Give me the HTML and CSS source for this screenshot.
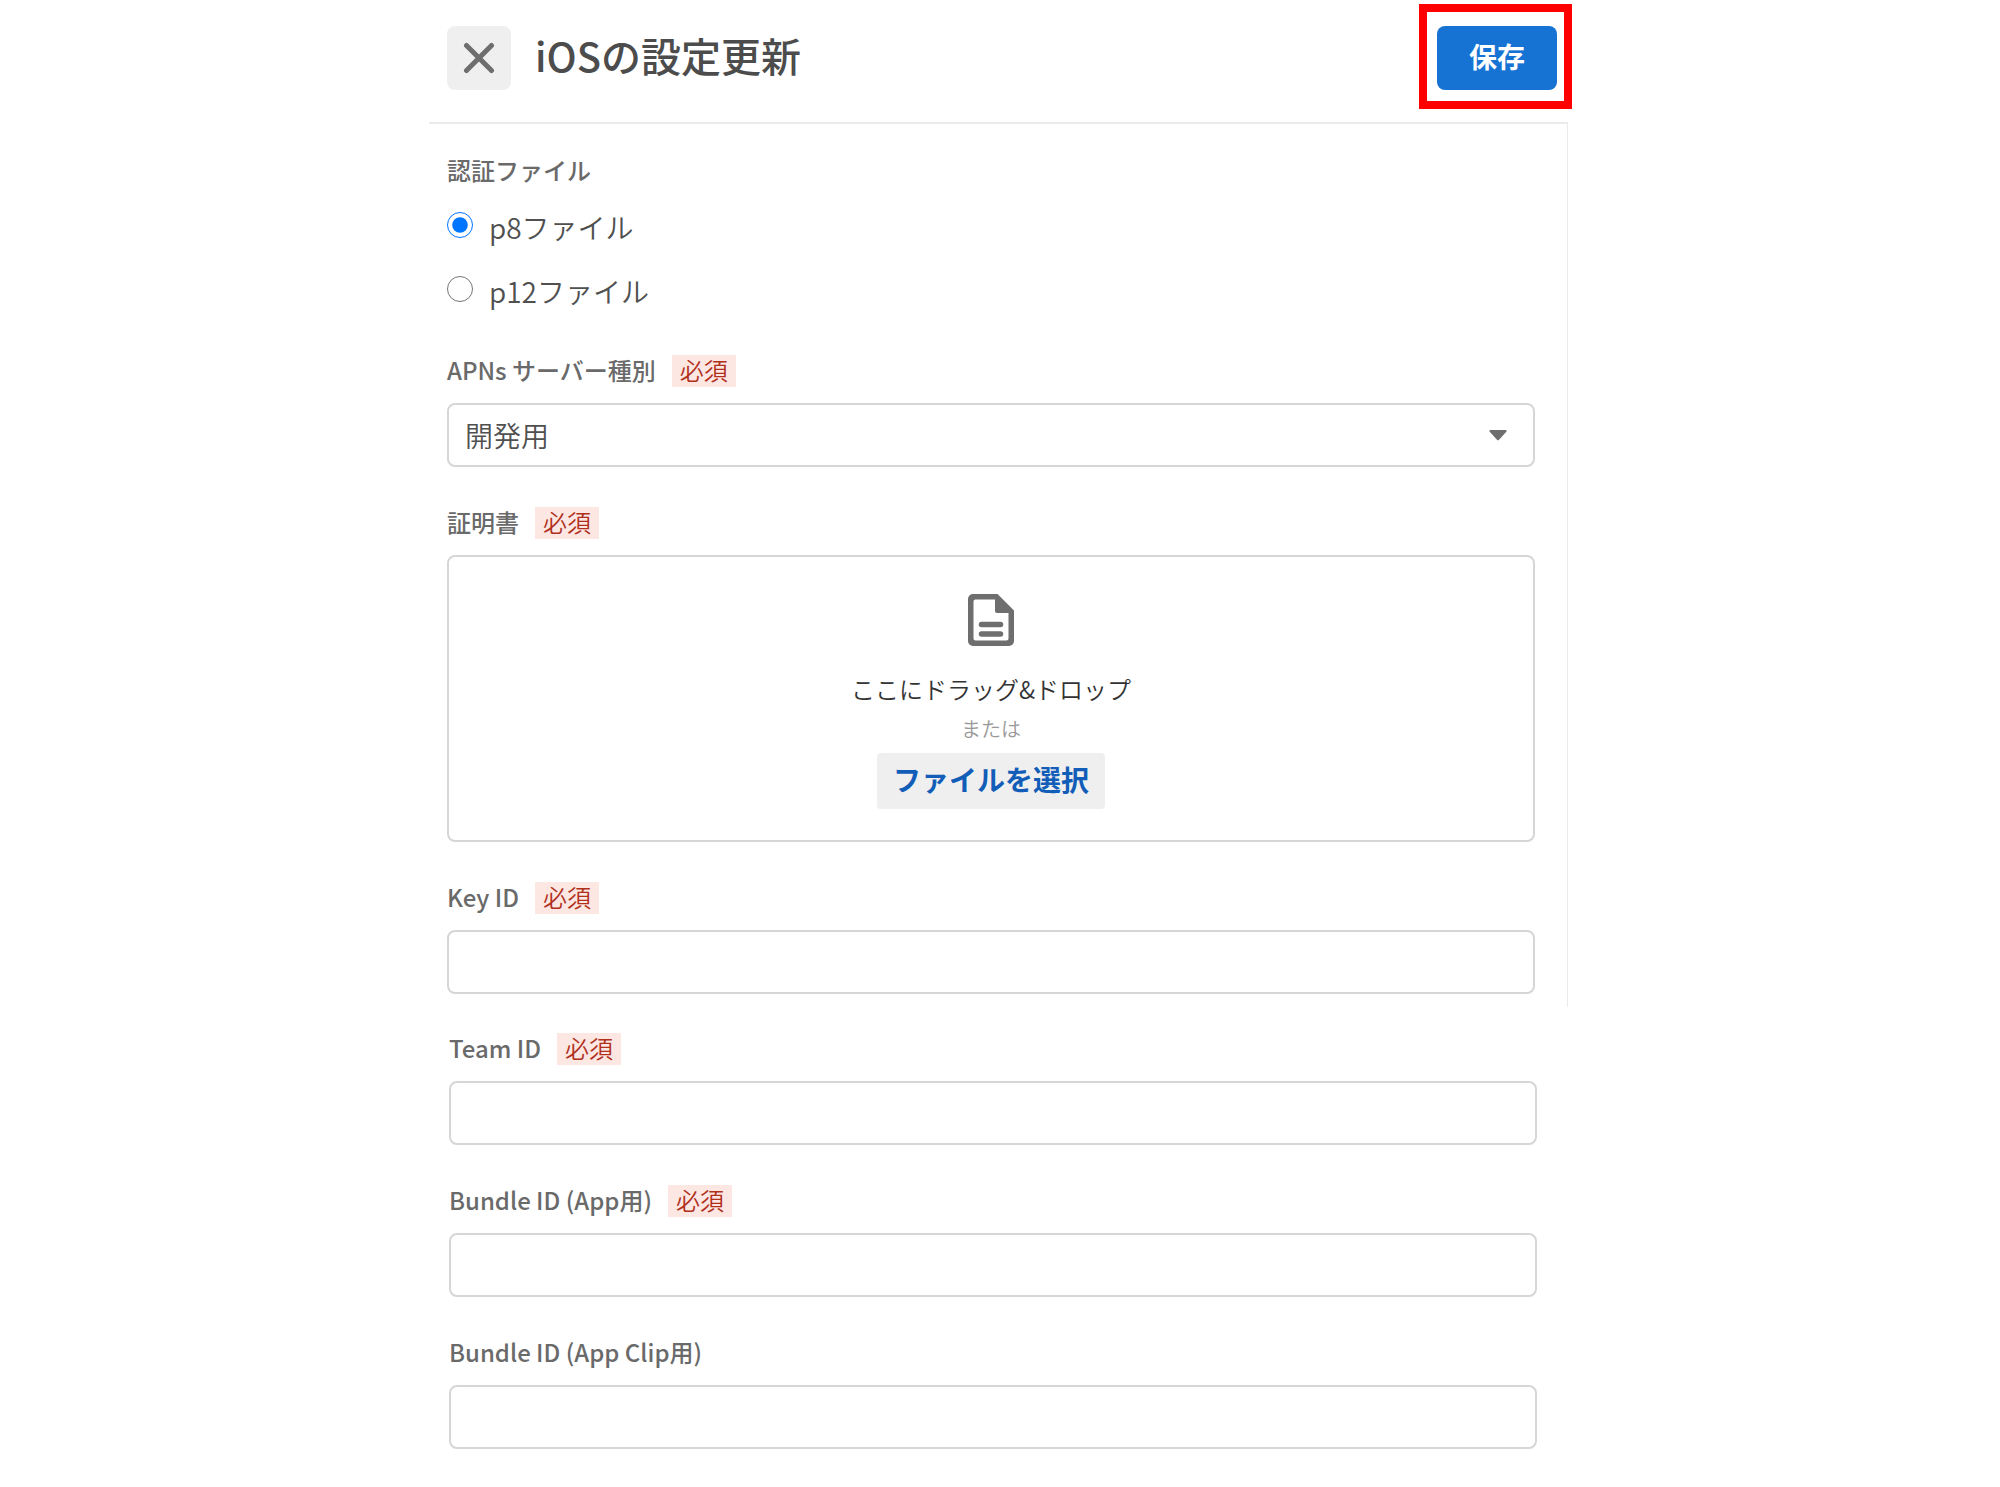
FILE: index.html
```html
<!DOCTYPE html>
<html lang="ja">
<head>
<meta charset="utf-8">
<meta name="viewport" content="width=device-width, initial-scale=1">
<title>iOSの設定更新</title>
<link rel="stylesheet" href="styles.css">
</head>
<body>
<form class="panel">
  <header class="header">
    <button class="close" type="button" aria-label="閉じる">
      <svg width="32" height="32" viewBox="0 0 32 32" fill="none" stroke="currentColor" stroke-width="5" stroke-linecap="round"><path d="M3.500 3.500L28.500 28.500M28.500 3.500L3.500 28.500"/></svg>
    </button>
    <h1 class="title">iOSの設定更新</h1>
    <div class="save-wrap"><button class="save" type="submit">保存</button></div>
  </header>

  <div class="section section-main">
    <fieldset class="auth">
      <legend class="label">認証ファイル</legend>
      <label class="radio"><input type="radio" name="auth" checked><span>p8ファイル</span></label>
      <label class="radio"><input type="radio" name="auth"><span>p12ファイル</span></label>
    </fieldset>

    <div class="field">
      <div class="field-head"><label class="label" for="server">APNs サーバー種別</label><span class="badge">必須</span></div>
      <div class="select-wrap">
        <select class="control" id="server"><option>開発用</option></select>
        <svg class="arrow" width="18" height="11" viewBox="0 0 18 11" fill="currentColor"><path d="M1.500 0h15a1 1 0 0 1 .8 1.700L10 9.800a1.400 1.400 0 0 1-2 0L.7 1.700A1 1 0 0 1 1.500 0z"/></svg>
      </div>
    </div>

    <div class="field">
      <div class="field-head"><span class="label" id="cert">証明書</span><span class="badge">必須</span></div>
      <div class="drop" role="group" aria-labelledby="cert">
        <svg class="file-icon" width="46" height="54" viewBox="0 0 46 54"><path fill="currentColor" fill-rule="evenodd" d="M5 1H29.500L46 17.500V48a5 5 0 0 1-5 5H5a5 5 0 0 1-5-5V6a5 5 0 0 1 5-5zM7.500 6.500A2 2 0 0 0 5.500 8.500V45.500a2 2 0 0 0 2 2H38.500a2 2 0 0 0 2-2V20H29a2 2 0 0 1-2-2V6.500z"/><path d="M13.500 31.500H32.500M13.500 41H32.500" stroke="currentColor" stroke-width="5.500" stroke-linecap="round"/></svg>
        <p class="drop-text">ここにドラッグ&amp;ドロップ</p>
        <p class="drop-or">または</p>
        <button class="choose" type="button">ファイルを選択</button>
      </div>
    </div>

    <div class="field">
      <div class="field-head"><label class="label" for="key-id">Key ID</label><span class="badge">必須</span></div>
      <input class="control" id="key-id" type="text">
    </div>
  </div>

  <div class="section section-ids">
    <div class="field">
      <div class="field-head"><label class="label" for="team-id">Team ID</label><span class="badge">必須</span></div>
      <input class="control" id="team-id" type="text">
    </div>
    <div class="field">
      <div class="field-head"><label class="label" for="bundle-app">Bundle ID (App用)</label><span class="badge">必須</span></div>
      <input class="control" id="bundle-app" type="text">
    </div>
    <div class="field">
      <div class="field-head"><label class="label" for="bundle-clip">Bundle ID (App Clip用)</label></div>
      <input class="control" id="bundle-clip" type="text">
    </div>
  </div>
</form>
</body>
</html>
```
FILE: styles.css
```css
* { box-sizing: border-box; }

body {
  margin: 0;
  padding: 0 3px 0 0;
  background: #fff;
  color: #505050;
  font-family: "Noto Sans CJK JP", sans-serif;
  font-size: 28px;
  font-weight: 350;
}

button, input, select { font: inherit; }

.panel {
  max-width: 1139px;
  margin: 0 auto;
}

.header {
  display: flex;
  align-items: flex-start;
  padding: 26px 11px 32px 18px;
  border-bottom: 2px solid #ebebeb;
}

.close {
  display: grid;
  place-items: center;
  width: 64px;
  height: 64px;
  padding: 0;
  border: 0;
  border-radius: 8px;
  background: #efefef;
  color: #6e6e6e;
}

.title {
  flex: 1;
  margin: 0 0 0 24px;
  color: #4c4c4c;
  font-size: 40px;
  font-weight: 500;
  line-height: 58px;
}

.save-wrap { position: relative; }

/* Red frame that points out the save button */
.save-wrap::after {
  content: "";
  position: absolute;
  inset: -22px -15px -19px -18px;
  border: 8px solid #f00;
  pointer-events: none;
}

.save {
  display: block;
  width: 120px;
  height: 64px;
  padding: 0 0 4px;
  border: 0;
  border-radius: 8px;
  background: #1673d3;
  color: #fff;
  font-weight: 700;
}

.section {
  display: flex;
  flex-direction: column;
  gap: 40px;
}

.section-main {
  padding: 31px 32px 13px 18px;
  border-right: 1px solid #ebebeb;
}

.section-ids { padding: 26px 31px 38px 20px; }

.auth {
  min-width: 0;
  margin: 0;
  padding: 0 0 6px;
  border: 0;
}

.label {
  padding: 0;
  color: #6a6a6a;
  font-size: 24px;
  font-weight: 500;
  line-height: 30px;
}

.auth .label { margin-bottom: 20px; }

.radio {
  display: flex;
  align-items: center;
  height: 40px;
  line-height: 36px;
}

.radio + .radio { margin-top: 24px; }

.radio span { padding-top: 4px; }

.radio input {
  width: 26px;
  height: 26px;
  margin: 0 16px 0 0;
}

.field-head {
  display: flex;
  align-items: flex-start;
  gap: 16px;
  height: 32px;
  margin-bottom: 16px;
}

.badge {
  height: 32px;
  padding: 0 8px;
  background: #fde7e3;
  color: #b0301c;
  font-size: 24px;
  line-height: 30px;
}

.control {
  display: block;
  width: 100%;
  height: 64px;
  padding: 0 16px;
  border: 2px solid #d6d6d6;
  border-radius: 8px;
  background: #fff;
  color: #505050;
  appearance: none;
}

.select-wrap { position: relative; }

.arrow {
  position: absolute;
  top: 27px;
  right: 28px;
  color: #6e6e6e;
  pointer-events: none;
}

.drop {
  display: flex;
  flex-direction: column;
  align-items: center;
  padding: 36px 16px 31px;
  border: 2px solid #d6d6d6;
  border-radius: 8px;
}

.file-icon { color: #6e6e6e; }

.drop-text {
  margin: 22px 0 0;
  color: #333;
  font-size: 24px;
  line-height: 40px;
}

.drop-or {
  margin: 4px 0 8px;
  color: #999;
  font-size: 20px;
  line-height: 32px;
}

.choose {
  height: 56px;
  padding: 0 16px 4px;
  border: 0;
  border-radius: 4px;
  background: #efefef;
  color: #125db8;
  font-weight: 700;
  line-height: 40px;
}
```
